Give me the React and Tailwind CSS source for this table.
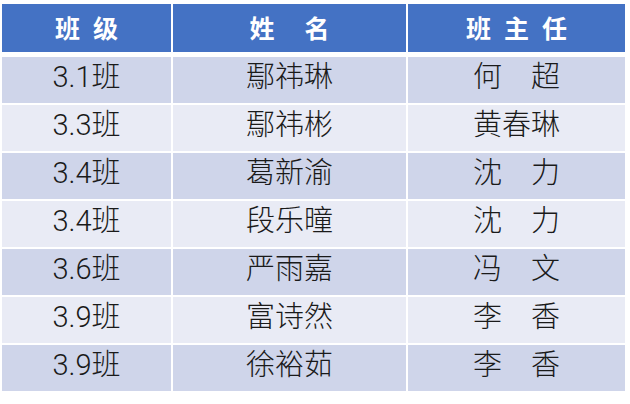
import React from "react";

const rows = [
  ["3.1班", "鄢祎琳", "何　超"],
  ["3.3班", "鄢祎彬", "黄春琳"],
  ["3.4班", "葛新渝", "沈　力"],
  ["3.4班", "段乐曈", "沈　力"],
  ["3.6班", "严雨嘉", "冯　文"],
  ["3.9班", "富诗然", "李　香"],
  ["3.9班", "徐裕茹", "李　香"],
];

const bodyFont = { fontFamily: 'Roboto, "Noto Sans CJK SC", sans-serif' };
const headFont = { fontFamily: '"Noto Sans CJK SC", sans-serif' };

function HeadCell({ chars, gap }) {
  return (
    <div className="bg-[#4472C4] h-[48px] flex items-center justify-center pb-[2px]">
      <div className={`flex items-center text-white font-bold text-[25px] leading-none ${gap}`} style={headFont}>
        {chars.map((c, i) => (
          <span key={i}>{c}</span>
        ))}
      </div>
    </div>
  );
}

export default function App() {
  return (
    <div className="w-[630px] h-[404px] bg-white pt-[4px] pl-[2px]">
      <div className="w-[623px] flex flex-col">
        <div className="grid grid-cols-[169px_233px_217px] gap-x-[2px]">
          <HeadCell chars={["班", "级"]} gap="gap-[13px]" />
          <HeadCell chars={["姓", "名"]} gap="gap-[30px]" />
          <HeadCell chars={["班", "主", "任"]} gap="gap-[13px]" />
        </div>
        <div className="mt-[5px] flex flex-col gap-[2px]">
          {rows.map((r, i) => (
            <div key={i} className="grid grid-cols-[169px_233px_217px] gap-x-[2px]">
              {r.map((t, j) => (
                <div
                  key={j}
                  className={`h-[46px] flex items-center justify-center pb-[5px] text-[29px] font-light leading-none text-[#1a1a1a] ${
                    i % 2 === 0 ? "bg-[#CFD5EA]" : "bg-[#E9EBF5]"
                  }`}
                  style={bodyFont}
                >
                  {t}
                </div>
              ))}
            </div>
          ))}
        </div>
      </div>
    </div>
  );
}
